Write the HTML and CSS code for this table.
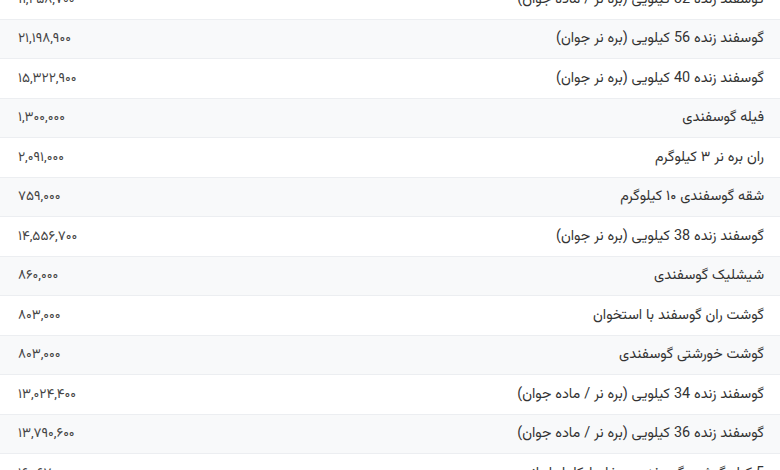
FILE: index.html
```html
<!DOCTYPE html>
<html lang="fa" dir="rtl">
<head>
  <meta charset="UTF-8" />
  <title>قیمت گوشت گوسفندی</title>
  <link rel="stylesheet" href="styles.css">
</head>
<body>

  <div class="price-list">
    <div class="row">
      <span class="name">گوسفند زنده 32 کیلویی (بره نر / ماده جوان)</span>
      <span class="price">۱۱,۴۵۸,۷۰۰</span>
    </div>
    <div class="row">
      <span class="name">گوسفند زنده 56 کیلویی (بره نر جوان)</span>
      <span class="price">۲۱,۱۹۸,۹۰۰</span>
    </div>
    <div class="row">
      <span class="name">گوسفند زنده 40 کیلویی (بره نر جوان)</span>
      <span class="price">۱۵,۳۲۲,۹۰۰</span>
    </div>
    <div class="row">
      <span class="name">فیله گوسفندی</span>
      <span class="price">۱,۳۰۰,۰۰۰</span>
    </div>
    <div class="row">
      <span class="name">ران بره نر ۳ کیلوگرم</span>
      <span class="price">۲,۰۹۱,۰۰۰</span>
    </div>
    <div class="row">
      <span class="name">شقه گوسفندی ۱۰ کیلوگرم</span>
      <span class="price">۷۵۹,۰۰۰</span>
    </div>
    <div class="row">
      <span class="name">گوسفند زنده 38 کیلویی (بره نر جوان)</span>
      <span class="price">۱۴,۵۵۶,۷۰۰</span>
    </div>
    <div class="row">
      <span class="name">شیشلیک گوسفندی</span>
      <span class="price">۸۶۰,۰۰۰</span>
    </div>
    <div class="row">
      <span class="name">گوشت ران گوسفند با استخوان</span>
      <span class="price">۸۰۳,۰۰۰</span>
    </div>
    <div class="row">
      <span class="name">گوشت خورشتی گوسفندی</span>
      <span class="price">۸۰۳,۰۰۰</span>
    </div>
    <div class="row">
      <span class="name">گوسفند زنده 34 کیلویی (بره نر / ماده جوان)</span>
      <span class="price">۱۳,۰۲۴,۴۰۰</span>
    </div>
    <div class="row">
      <span class="name">گوسفند زنده 36 کیلویی (بره نر / ماده جوان)</span>
      <span class="price">۱۳,۷۹۰,۶۰۰</span>
    </div>
    <div class="row">
      <span class="name">5 کیلو گوشت گوسفندی مخلوط کامل ایرانی</span>
      <span class="price">۱۶,۰۶۷,۰۰۰</span>
    </div>
  </div>

</body>
</html>
```

FILE: styles.css
```css
html, body {
  margin: 0;
  background-color: #fff;
  color: #333;
  font-family: "Vazirmatn", "Noto Sans Arabic", "DejaVu Sans", sans-serif;
  overflow: hidden;
}

.price-list {
  margin-top: -20px;
}

.row {
  display: flex;
  align-items: center;
  justify-content: space-between;
  height: 38.5px;
  padding: 0 16px 0 18px;
  border-bottom: 1px solid #eceef1;
}

.row:nth-child(even) {
  background-color: #f8f9fa;
}

.name {
  font-size: 14.4px;
}

.price {
  font-size: 13.6px;
  color: #444;
  direction: ltr;
}
```
